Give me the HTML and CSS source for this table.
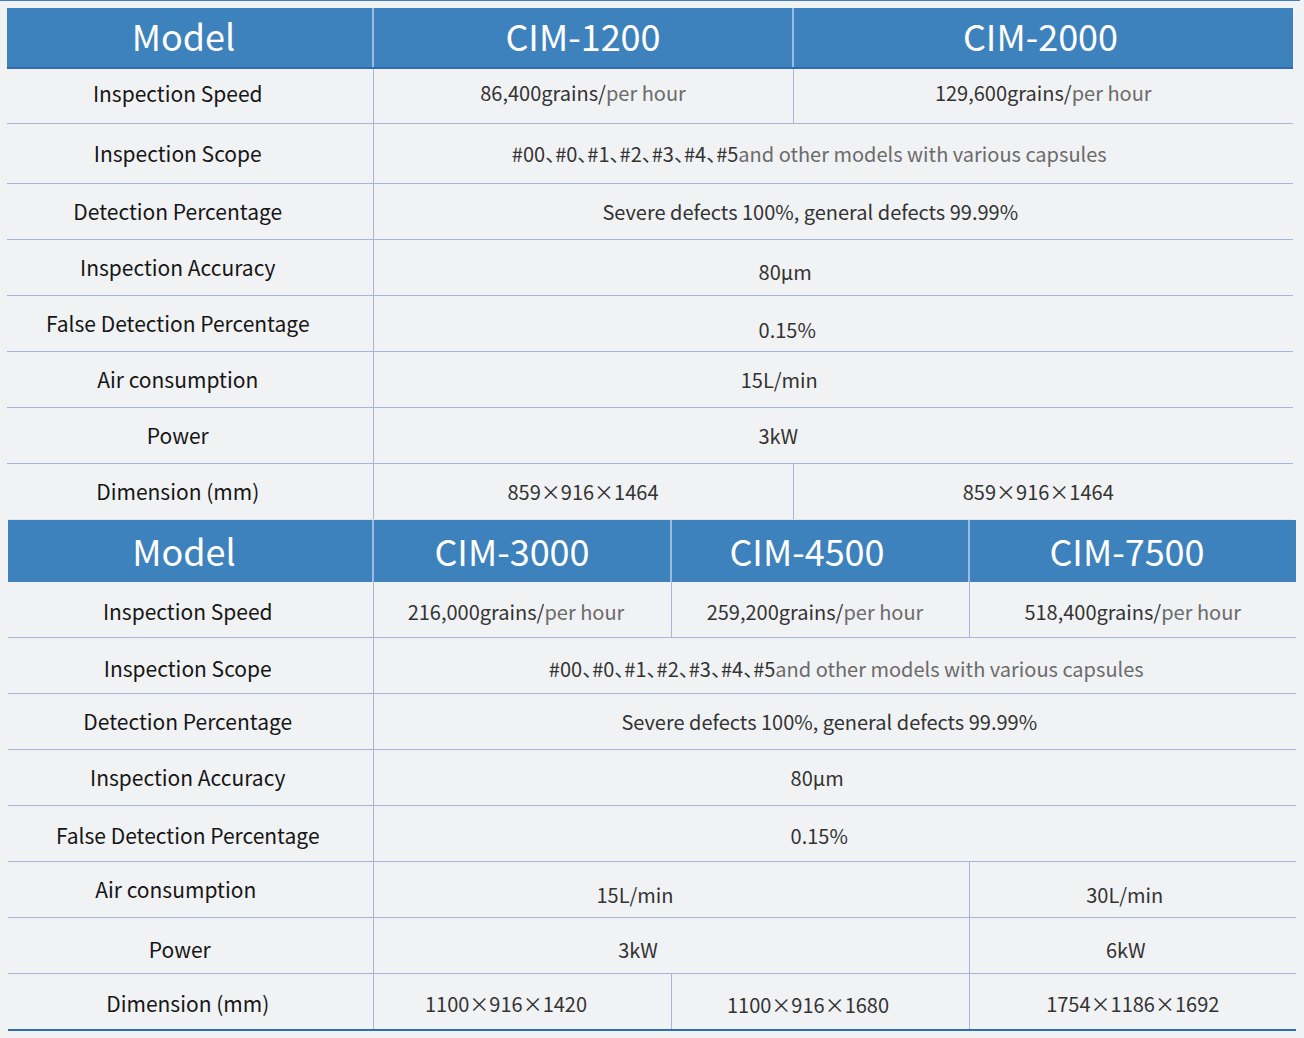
FILE: index.html
```html
<!DOCTYPE html>
<html>
<head>
<meta charset="utf-8">
<link rel="stylesheet" href="styles.css">
</head>
<body>
<div class="page">
  <div class="topline"></div>
  <table class="spec spec1">
    <colgroup><col class="c-label1"><col class="c-a1"><col></colgroup>
    <thead>
      <tr class="head"><th class="pr12">Model</th><th>CIM-1200</th><th class="pr6">CIM-2000</th></tr>
    </thead>
    <tbody>
      <tr class="r54"><td class="lbl">Inspection Speed</td><td>86,400grains/<span class="gray">per hour</span></td><td>129,600grains/<span class="gray">per hour</span></td></tr>
      <tr class="r60"><td class="lbl">Inspection Scope</td><td colspan="2" class="pr48"><span class="nums">#00、#0、#1、#2、#3、#4、#5</span><span class="gray">and other models with various capsules</span></td></tr>
      <tr><td class="lbl">Detection Percentage</td><td colspan="2" class="pr46">Severe defects 100%, general defects 99.99%</td></tr>
      <tr><td class="lbl">Inspection Accuracy</td><td colspan="2" class="pr96 pt8">80μm</td></tr>
      <tr><td class="lbl">False Detection Percentage</td><td colspan="2" class="pr92 pt12">0.15%</td></tr>
      <tr><td class="lbl">Air consumption</td><td colspan="2" class="pr108">15L/min</td></tr>
      <tr><td class="lbl">Power</td><td colspan="2" class="pr110">3kW</td></tr>
      <tr class="last1"><td class="lbl">Dimension (mm)</td><td>859×916×1464</td><td class="pr10">859×916×1464</td></tr>
    </tbody>
  </table>
  <table class="spec spec2">
    <colgroup><col class="c-label2"><col class="c-b"><col class="c-b"><col></colgroup>
    <thead>
      <tr class="head"><th class="pr12">Model</th><th class="pr20">CIM-3000</th><th class="pr26">CIM-4500</th><th class="pr12">CIM-7500</th></tr>
    </thead>
    <tbody>
      <tr><td class="lbl pt4">Inspection Speed</td><td class="pt4 pr12">216,000grains/<span class="gray">per hour</span></td><td class="pt4 pr10">259,200grains/<span class="gray">per hour</span></td><td class="pt4">518,400grains/<span class="gray">per hour</span></td></tr>
      <tr><td class="lbl pt6">Inspection Scope</td><td colspan="3" class="pt6 pl23"><span class="nums">#00、#0、#1、#2、#3、#4、#5</span><span class="gray">and other models with various capsules</span></td></tr>
      <tr><td class="lbl">Detection Percentage</td><td colspan="3" class="pr11">Severe defects 100%, general defects 99.99%</td></tr>
      <tr><td class="lbl">Inspection Accuracy</td><td colspan="3" class="pr35">80μm</td></tr>
      <tr><td class="lbl pt4">False Detection Percentage</td><td colspan="3" class="pt4 pr31">0.15%</td></tr>
      <tr><td class="lbl lbl-air">Air consumption</td><td colspan="2" class="pt10 pr72">15L/min</td><td class="pt10 pr16">30L/min</td></tr>
      <tr><td class="lbl lbl-pow pt8">Power</td><td colspan="2" class="pt8 pr66">3kW</td><td class="pt8 pr14">6kW</td></tr>
      <tr class="last2"><td class="lbl pt4">Dimension (mm)</td><td class="pt4 pr32">1100×916×1420</td><td class="pt6 pr24">1100×916×1680</td><td class="pt4">1754×1186×1692</td></tr>
    </tbody>
  </table>
</div>
</body>
</html>
```
FILE: styles.css
```css
html, body {
  margin: 0;
  padding: 0;
  background: #f1f2f4;
}
body {
  font-family: "Noto Sans CJK SC", "Noto Sans", sans-serif;
  color: #1a1a1a;
}
.page {
  padding: 0 0 0 7px;
  width: 1297px;
}
.topline {
  height: 1px;
  background: #3f7fc0;
  margin-left: -7px;
  width: 1300px;
  margin-bottom: 7px;
}
.spec {
  border-collapse: collapse;
  table-layout: fixed;
}
.spec1 { width: 1286px; }
.spec2 { width: 1288px; margin-left: 1px; }
.c-label1 { width: 366px; }
.c-a1 { width: 420px; }
.c-label2 { width: 365px; }
.c-b { width: 298px; }

.head th {
  background: #3d82bd;
  color: #ffffff;
  font-weight: 400;
  font-size: 36px;
  height: 53px;
  padding: 0 0 6px 0;
  line-height: 1;
  border-left: 2px solid #9dbbe0;
  border-bottom: 2px solid #2e6db3;
  text-align: center;
}
.head th:first-child { border-left: none; }
.spec2 .head th { border-bottom: none; height: 60px; padding-bottom: 2px; padding-top: 0; }

.spec td {
  height: 55px;
  padding: 0;
  text-align: center;
  font-size: 20px;
  font-weight: 400;
  line-height: 1;
  color: #333;
  border-bottom: 1px solid #a7b5dc;
  border-left: 1px solid #a7b5dc;
}
.spec td.lbl {
  border-left: none;
  color: #161616;
  font-size: 21px;
}
.spec1 td.lbl { padding-right: 24px; }
.spec2 td.lbl { padding-right: 5px; }
.spec2 td.lbl-air { padding-right: 29px; }
.spec2 td.lbl-pow { padding-right: 21px; }

.spec .r54 td { height: 48px; padding-bottom: 6px; }
.spec .r60 td { height: 59px; }
.spec1 .last1 td { border-bottom: 1px solid #dfe4ee; }
.spec2 .last2 td { border-bottom: 2px solid #2f6eb6; }

.gray { color: #6b6b6b; }
.nums { font-feature-settings: "halt" 1; }

/* vertical nudges (height reduced by the same amount) */
.spec td.pt4 { padding-top: 4px; height: 51px; }
.spec td.pt6 { padding-top: 6px; height: 49px; }
.spec td.pt8 { padding-top: 8px; height: 47px; }
.spec td.pt10 { padding-top: 10px; height: 45px; }
.spec td.pt12 { padding-top: 12px; height: 43px; }

/* horizontal nudges */
.pr6 { padding-right: 6px !important; }
.pr10 { padding-right: 10px !important; }
.pr11 { padding-right: 11px !important; }
.pr12 { padding-right: 12px !important; }
.pr14 { padding-right: 14px !important; }
.pr16 { padding-right: 16px !important; }
.pr20 { padding-right: 20px !important; }
.pr24 { padding-right: 24px !important; }
.pr26 { padding-right: 26px !important; }
.pr31 { padding-right: 31px !important; }
.pr32 { padding-right: 32px !important; }
.pr35 { padding-right: 35px !important; }
.pr46 { padding-right: 46px !important; }
.pr48 { padding-right: 48px !important; }
.pr66 { padding-right: 66px !important; }
.pr72 { padding-right: 72px !important; }
.pr92 { padding-right: 92px !important; }
.pr96 { padding-right: 96px !important; }
.pr108 { padding-right: 108px !important; }
.pr110 { padding-right: 110px !important; }
.pl23 { padding-left: 23px !important; }
```
